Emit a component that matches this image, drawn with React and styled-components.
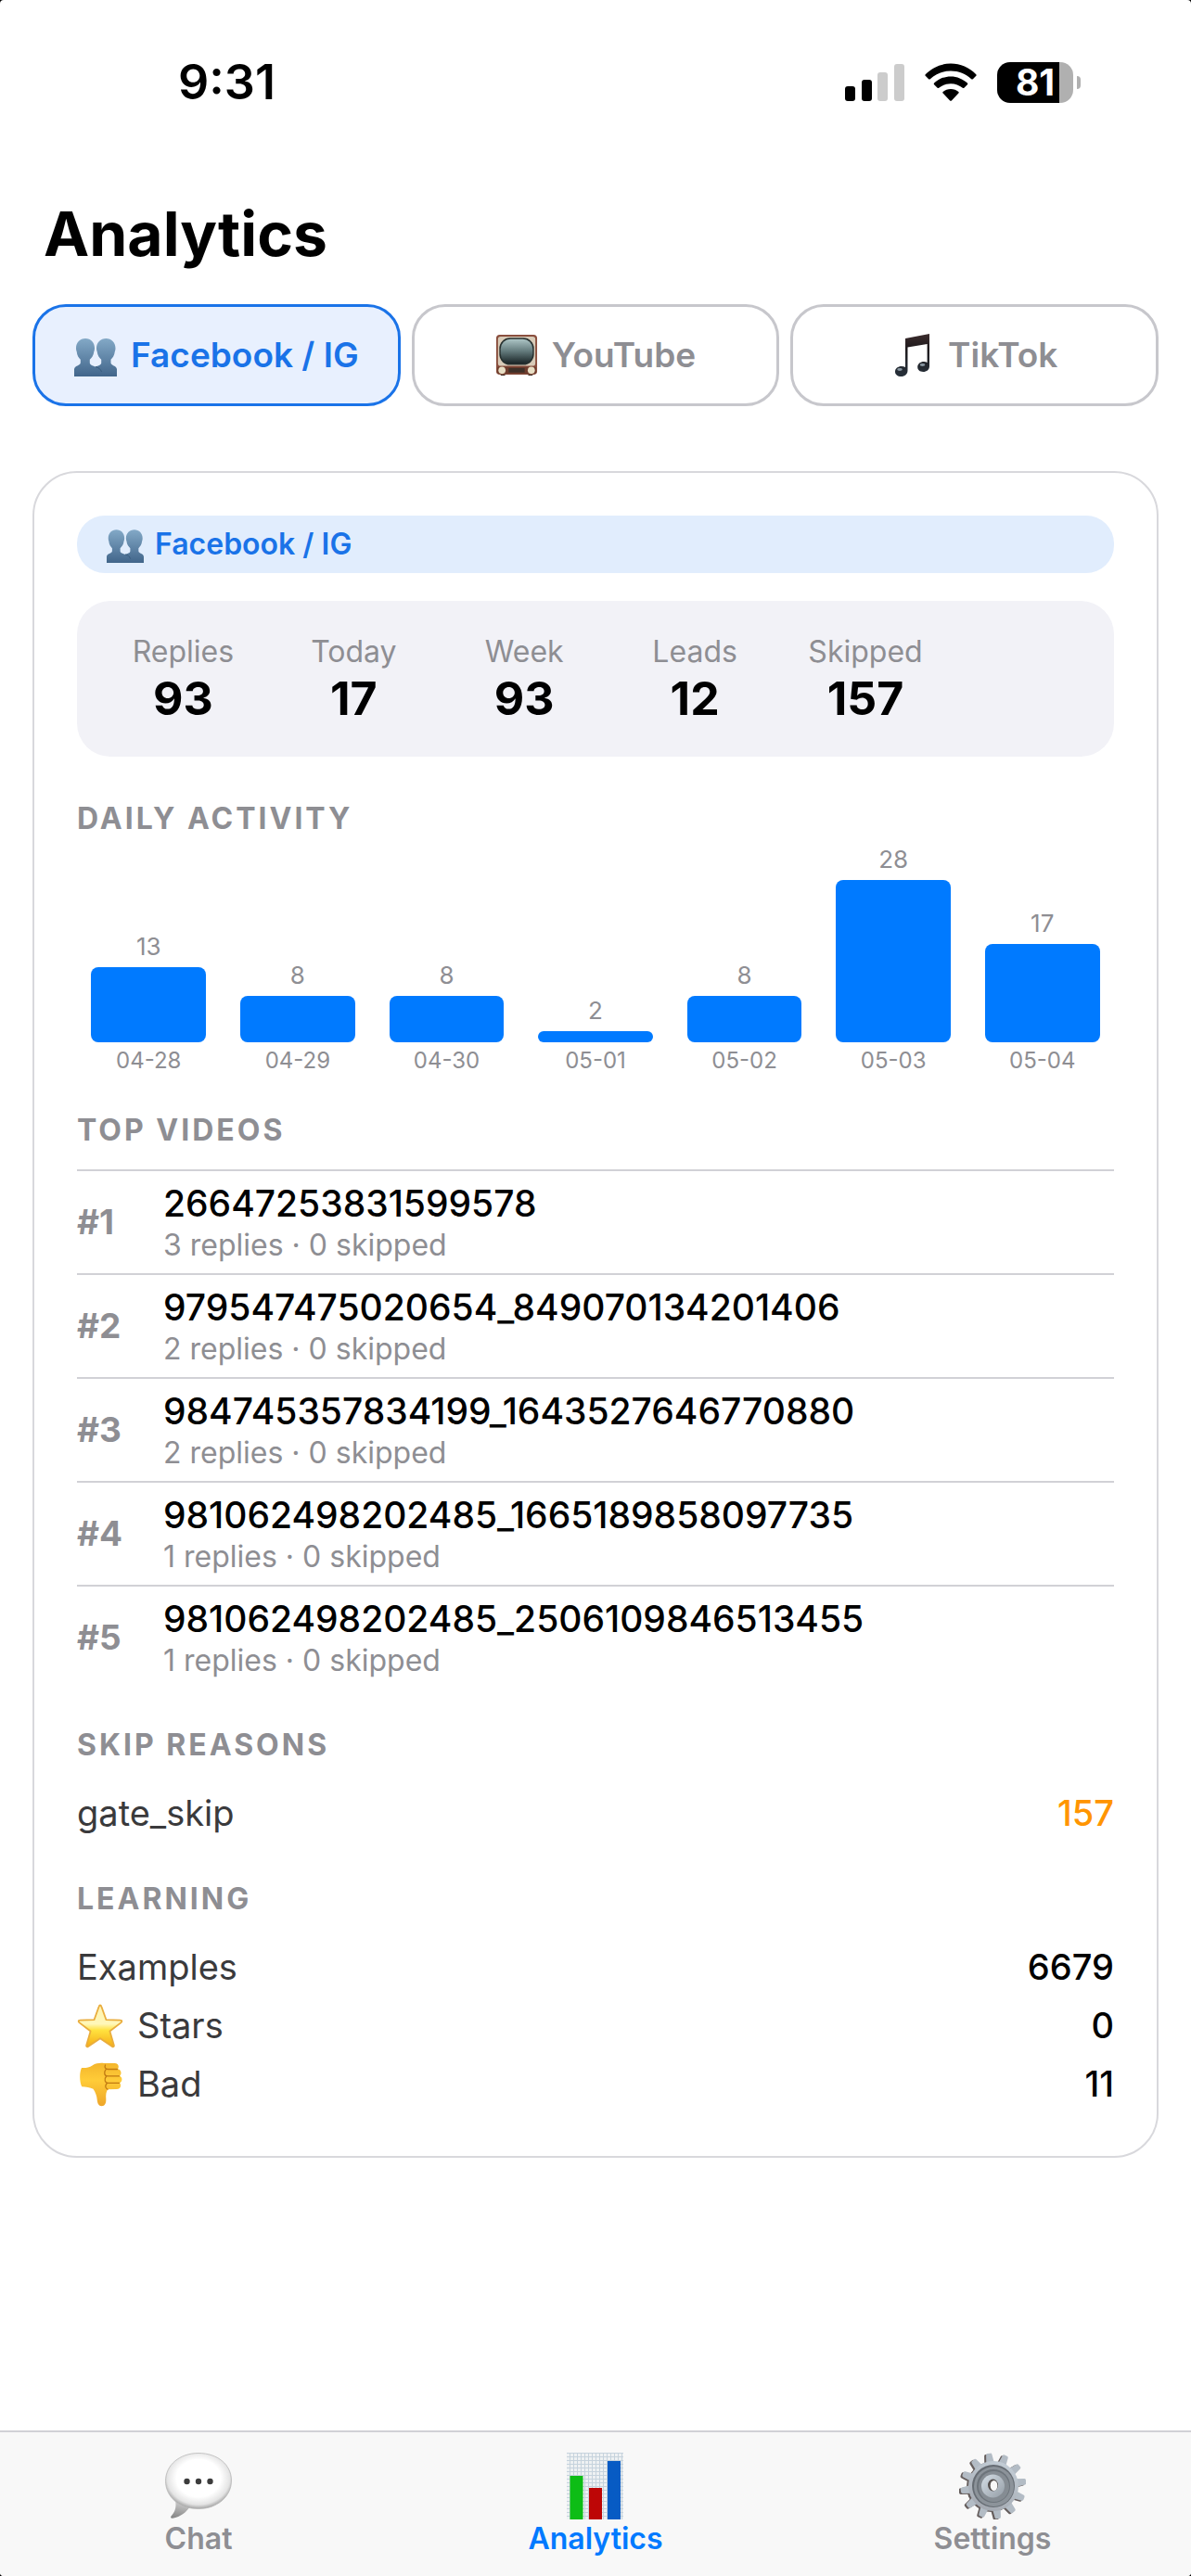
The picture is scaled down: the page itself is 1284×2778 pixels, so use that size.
import React from 'react';
import styled, { createGlobalStyle, ThemeProvider } from 'styled-components';


const theme = {
  colors: {
    text: '#000000',
    body: '#3a3a3c',
    muted: '#8e8e93',
    blue: '#1a73e8',
    system: '#007aff',
    orange: '#ff9500',
    line: '#d1d1d6',
    panel: '#f2f2f7',
  },
  fonts: {
    main: 'Inter, "Liberation Sans", sans-serif',
  },
};

const GlobalStyle = createGlobalStyle`
  * {
    box-sizing: border-box;
  }
  body {
    margin: 0;
    background: #000000;
  }
  button {
    font-family: inherit;
    cursor: pointer;
  }
`;

const Screen = styled.div`
  min-height: 100vh;
  display: flex;
  flex-direction: column;
  overflow: hidden;
  border-radius: 4px;
  background: #ffffff;
  color: ${(props) => props.theme.colors.text};
  font-family: ${(props) => props.theme.fonts.main};
`;

const StatusBar = styled.header`
  display: flex;
  justify-content: space-between;
  align-items: center;
  padding: 58px 119px 0 192px;
`;

const Time = styled.span`
  font-size: 52px;
  line-height: 62px;
  font-weight: 600;
`;

const StatusIcons = styled.div`
  display: flex;
  align-items: center;
  gap: 22px;
`;

const BatteryWrap = styled.div`
  display: flex;
  align-items: center;
  gap: 4px;
`;

const BatteryBody = styled.div`
  width: 82px;
  border-radius: 14px;
  background: linear-gradient(to right, #000000 82%, #b0b0b0 82%);
  color: #ffffff;
  font-size: 39px;
  line-height: 44px;
  font-weight: 700;
  text-align: center;
`;

const BatteryTip = styled.div`
  width: 4px;
  height: 14px;
  border-radius: 0 4px 4px 0;
  background: #b0b0b0;
`;

const Main = styled.main`
  flex: 1;
  padding: 90px 35px 0;
`;

const Title = styled.h1`
  margin: 0 0 34px 12px;
  font-size: 66px;
  line-height: 84px;
  font-weight: 700;
`;

const Tabs = styled.div`
  display: flex;
  gap: 12px;
  margin-bottom: 70px;
`;

const Tab = styled.button`
  flex: 1 1 0;
  min-width: 0;
  display: flex;
  justify-content: center;
  align-items: center;
  gap: 15px;
  padding: 29px 0;
  border: 3px solid ${(props) => (props.$active ? props.theme.colors.blue : '#c7c7cc')};
  border-radius: 36px;
  background: ${(props) => (props.$active ? '#e8f0fe' : '#ffffff')};
  color: ${(props) => (props.$active ? props.theme.colors.blue : props.theme.colors.muted)};
  font-size: 37px;
  line-height: 46px;
  font-weight: 600;
`;

const Card = styled.section`
  padding: 46px;
  border: 2px solid #d8d8dc;
  border-radius: 48px;
`;

const Badge = styled.div`
  display: flex;
  align-items: center;
  gap: 12px;
  padding: 10px 32px;
  margin-bottom: 30px;
  border-radius: 30px;
  background: #e1edfd;
  color: ${(props) => props.theme.colors.blue};
  font-size: 32px;
  line-height: 42px;
  font-weight: 600;
`;

const Stats = styled.dl`
  display: grid;
  grid-template-columns: repeat(5, 15%);
  column-gap: 27px;
  margin: 0 0 47px;
  padding: 34px 36px;
  border-radius: 36px;
  background: ${(props) => props.theme.colors.panel};
  text-align: center;
`;

const StatLabel = styled.dt`
  color: ${(props) => props.theme.colors.muted};
  font-size: 32px;
  line-height: 42px;
`;

const StatValue = styled.dd`
  margin: 0;
  font-size: 50px;
  line-height: 58px;
  font-weight: 700;
`;

const SectionTitle = styled.h2`
  margin: 0 0 ${(props) => (props.$tight ? '8px' : '22px')};
  color: ${(props) => props.theme.colors.muted};
  font-size: 32px;
  line-height: 40px;
  font-weight: 700;
  letter-spacing: 3px;
  text-transform: uppercase;
`;

const Chart = styled.div`
  display: flex;
  gap: 6px;
  margin-bottom: 40px;
`;

const Day = styled.div`
  flex: 1;
  display: flex;
  flex-direction: column;
  align-items: center;
  color: ${(props) => props.theme.colors.muted};
`;

const BarArea = styled.div`
  width: 100%;
  height: 213px;
  padding-top: 38px;
  display: flex;
  flex-direction: column;
  justify-content: flex-end;
  align-items: center;
`;

const BarSlot = styled.div`
  width: 80%;
  height: 175px;
  display: flex;
  flex-direction: column;
  justify-content: flex-end;
`;

const BarValue = styled.span`
  padding-bottom: 6px;
  font-size: 26px;
  line-height: 32px;
  text-align: center;
`;

const Bar = styled.div`
  flex-shrink: 0;
  border-radius: 8px;
  background: ${(props) => props.theme.colors.system};
`;

const BarDate = styled.span`
  margin-top: 5px;
  font-size: 24px;
  line-height: 30px;
`;

const Videos = styled.ol`
  margin: 0 0 41px;
  padding: 0;
  list-style: none;
`;

const Video = styled.li`
  display: flex;
  align-items: center;
  padding: 10px 0;
  border-top: 2px solid ${(props) => props.theme.colors.line};
`;

const Rank = styled.span`
  width: 93px;
  color: ${(props) => props.theme.colors.muted};
  font-size: 37px;
  line-height: 44px;
  font-weight: 700;
`;

const VideoId = styled.div`
  font-size: 39px;
  line-height: 50px;
  font-weight: 500;
`;

const VideoMeta = styled.div`
  color: ${(props) => props.theme.colors.muted};
  font-size: 32px;
  line-height: 40px;
`;

const Rows = styled.dl`
  margin: 0 0 ${(props) => (props.$last ? '0' : '41px')};
`;

const Row = styled.div`
  display: flex;
  justify-content: space-between;
  align-items: center;
  font-size: 38px;
  line-height: 63px;
`;

const RowLabel = styled.dt`
  display: flex;
  align-items: center;
  gap: 15px;
  color: ${(props) => props.theme.colors.body};
`;

const RowValue = styled.dd`
  margin: 0;
  color: ${(props) => (props.$warn ? props.theme.colors.orange : props.theme.colors.text)};
  font-weight: 500;
`;

const TabBar = styled.nav`
  display: flex;
  padding: 22px 0 19px;
  border-top: 2px solid ${(props) => props.theme.colors.line};
  background: #f8f8f8;
`;

const TabBarItem = styled.a`
  flex: 1;
  display: flex;
  flex-direction: column;
  align-items: center;
  color: ${(props) => (props.$active ? props.theme.colors.system : props.theme.colors.muted)};
  font-size: 32px;
  line-height: 42px;
  font-weight: 600;
  text-decoration: none;
`;


const SignalIcon = () => (
  <svg width="64" height="42" viewBox="0 0 64 42" aria-hidden="true">
    <rect x="0" y="25" width="11" height="16" rx="3" />
    <rect x="18" y="18" width="11" height="23" rx="3" />
    <rect x="35" y="10" width="11" height="31" rx="3" fill="#cccccc" />
    <rect x="53" y="1" width="11" height="40" rx="3" fill="#cccccc" />
  </svg>
);

const WifiIcon = () => (
  <svg width="56" height="42" viewBox="0 0 56 42" aria-hidden="true">
    <path d="M0.7 12.2C8 4.9 17.600 0.500 28 0.500s20 4.400 27.300 11.700c.5.5.5 1.100 0 1.600l-3.400 3.400c-.5.5-1.200.5-1.700 0C44.300 11.600 36.500 8.400 28 8.400S11.700 11.600 5.800 17.200c-.5.5-1.200.5-1.700 0L.7 13.800c-.5-.5-.5-1.100 0-1.600z" />
    <path d="M10.100 21.600C15 17 21.200 14.400 28 14.400s13 2.600 17.900 7.200c.5.5.5 1.200 0 1.700l-3.500 3.400c-.5.5-1.100.5-1.600.1C37.300 23.900 32.900 22.200 28 22.200s-9.300 1.700-12.800 4.600c-.5.4-1.100.4-1.600-.1l-3.500-3.400c-.5-.5-.5-1.200 0-1.700z" />
    <path d="M19.600 31c2.300-2 5.200-3.100 8.400-3.100s6.100 1.100 8.400 3.100c.5.5.5 1.100 0 1.600l-7.500 7.800c-.5.5-1.300.5-1.800 0l-7.500-7.800c-.5-.5-.5-1.100 0-1.600z" />
  </svg>
);

const PeopleIcon = ({ size }) => (
  <svg width={size} height={size} viewBox="0 0 46 46" aria-hidden="true">
    <defs>
      <linearGradient id="people" x1="0" y1="0" x2="0" y2="1">
        <stop offset="0" stopColor="#83a9c7" />
        <stop offset="1" stopColor="#41658a" />
      </linearGradient>
    </defs>
    <path
      fill="url(#people)"
      d="M12 5c6 0 10 4.500 10 10.500 0 1.500-.2 2.700-.7 3.800-.4 4.200-2.600 6.700-4.500 8.500v3.400c0 2.600 4 3.200 6.200 4.300 2.200-1.100 6.200-1.700 6.200-4.300v-3.400c-1.900-1.800-4.100-4.300-4.500-8.500-.5-1.100-.7-2.300-.7-3.800C24 9.500 28.500 5 34.300 5S44.500 9.500 44.500 15.500c0 1.500-.2 2.700-.7 3.800-.4 4.200-2.500 6.700-4.300 8.500v3.400c0 3.200 6.500 2.800 6.500 7.300V46H0v-7.500c0-4.500 6.800-4.100 6.800-7.300v-3.400C5 26 3 23.500 2.700 19.300 2.200 18.200 2 17 2 15.500 2 9.500 6.200 5 12 5z"
    />
    <path fill="none" stroke="#385a7c" strokeWidth="1" d="M23 35.500c3.500 1 5.500 2.500 6.500 5.500" />
  </svg>
);

const TvIcon = () => (
  <svg width="46" height="46" viewBox="0 0 48 46" aria-hidden="true">
    <defs>
      <linearGradient id="tvScreen" x1="0" y1="0" x2="0" y2="1">
        <stop offset="0" stopColor="#acc4c5" />
        <stop offset="0.5" stopColor="#62797b" />
        <stop offset="1" stopColor="#1a2426" />
      </linearGradient>
    </defs>
    <path fill="#3b2a22" d="M6 43h5v3H6zM37 43h5v3h-5z" />
    <rect x="1" y="0" width="46" height="45" rx="4" fill="#8a4f3e" />
    <rect x="3" y="2" width="42" height="33" rx="3" fill="#d8cbb8" />
    <rect x="4.500" y="3.500" width="39" height="30.500" rx="12" fill="#26302f" />
    <rect x="6" y="5" width="36" height="27.500" rx="11" fill="url(#tvScreen)" />
    <rect x="2" y="36" width="44" height="8" rx="2" fill="#6e3c2d" />
    <rect x="15" y="37.500" width="18" height="5" fill="#3e3028" />
    <circle cx="7.500" cy="40" r="4" fill="#e8dfc5" />
    <circle cx="40.500" cy="40" r="4" fill="#e8dfc5" />
  </svg>
);

const MusicIcon = () => (
  <svg width="46" height="46" viewBox="0 0 46 46" aria-hidden="true">
    <defs>
      <linearGradient id="note" x1="0" y1="0" x2="0" y2="1">
        <stop offset="0" stopColor="#3c2c2d" />
        <stop offset="0.350" stopColor="#1d191c" />
        <stop offset="1" stopColor="#27313b" />
      </linearGradient>
    </defs>
    <path
      fill="url(#note)"
      d="M15 5l26-5v35c0 3.800-3 6-6.800 6-3.600 0-6-2-6-5.200 0-3.500 3.100-5.800 6.800-5.800 1.400 0 2.600.3 3.600.9V11L17.500 14.500V39.500c0 3.900-3 6.500-7 6.500C6.700 46 4 43.900 4 40.700c0-3.400 3.100-5.700 6.900-5.700 1.600 0 3 .4 4.100 1.100z"
    />
    <ellipse cx="9" cy="38.500" rx="2.800" ry="1.400" fill="#8997a2" />
    <ellipse cx="33.500" cy="33.500" rx="2.800" ry="1.400" fill="#8997a2" />
  </svg>
);

const StarIcon = () => (
  <svg width="50" height="48" viewBox="0 0 50 48" aria-hidden="true">
    <defs>
      <linearGradient id="star" x1="0" y1="0" x2="0" y2="1">
        <stop offset="0" stopColor="#fff3b0" />
        <stop offset="0.450" stopColor="#fff7b8" />
        <stop offset="0.600" stopColor="#ffe23f" />
        <stop offset="1" stopColor="#f5ab16" />
      </linearGradient>
    </defs>
    <path
      fill="url(#star)"
      stroke="#e9ad3d"
      strokeWidth="1.800"
      strokeLinejoin="round"
      d="M25 1.500c.8 0 1.100.6 1.400 1.500L31.500 17.200l15.300.5c1.700 0 2 1.400.8 2.400L35.400 29.500l4.400 15c.5 1.600-.6 2.300-1.900 1.400L25 37.200 12.100 45.900c-1.300.9-2.400.2-1.900-1.400l4.400-15L2.400 20.100c-1.200-1-.9-2.400.8-2.400l15.300-.5L23.600 3c.3-.9.600-1.500 1.400-1.500z"
    />
  </svg>
);

const ThumbDownIcon = () => (
  <svg width="50" height="48" viewBox="0 0 50 48" aria-hidden="true">
    <defs>
      <linearGradient id="thumb" x1="0" y1="0" x2="0" y2="1">
        <stop offset="0" stopColor="#f4b62c" />
        <stop offset="0.400" stopColor="#ffcc38" />
        <stop offset="1" stopColor="#eea62a" />
      </linearGradient>
    </defs>
    <path
      fill="url(#thumb)"
      d="M5 6c4 .4 8-.3 11.500-2.600C20.500 1 25 .6 29 1h11.500c2.600 0 4.300 1.600 4.300 3.800 0 1-.3 1.800-.8 2.500 2.300.5 3.500 2.200 3.500 4.200 0 1.300-.5 2.400-1.400 3.200 1.500.8 2.300 2.100 2.300 3.800 0 1.700-.9 3.100-2.400 3.800.8.8 1.100 1.700 1.100 2.700 0 2.400-1.900 4-4.300 4L33 29.200c-1.600 2.600-2 6.300-1.700 10.300.3 4.600-1.200 7.700-4.600 7.700-3.300 0-4.700-3-5-7-.3-3.700-1.700-7.800-4.200-11.400-3.300-1.600-7.800-2.200-12.300-2.500C2.600 20.500 2.500 11 5 6z"
    />
    <path
      fill="none"
      stroke="#c17a12"
      strokeWidth="1.300"
      strokeLinecap="round"
      d="M43.500 7.500H33.500c-3 0-4-2-3-4.500M45.500 14.900H33c-3.500 0-4.300-4-2-7M45.500 22.300H33.500c-3.500 0-4.500-4.200-2-7M32 23c-2 2.300-1.500 5 1 6.200"
    />
  </svg>
);

const ChatIcon = () => (
  <svg width="72" height="72" viewBox="0 0 72 72" aria-hidden="true">
    <defs>
      <radialGradient id="bubble" cx="0.500" cy="0.450" r="0.560">
        <stop offset="0.600" stopColor="#ffffff" />
        <stop offset="0.850" stopColor="#e4e4e4" />
        <stop offset="1" stopColor="#9c9c9c" />
      </radialGradient>
      <linearGradient id="tail" x1="0.500" y1="0" x2="0.300" y2="1">
        <stop offset="0" stopColor="#d0d0d0" />
        <stop offset="1" stopColor="#868686" />
      </linearGradient>
    </defs>
    <path fill="url(#tail)" d="M11 52c1.500 7-.5 12-4.500 16.500-1 1.300-.2 2.500 1.500 2.200C17 69 23 64.500 27.500 57z" />
    <path
      fill="url(#bubble)"
      stroke="#b9b9b9"
      strokeWidth="0.800"
      d="M36 .5c20.500 0 35.500 12.500 35.500 29.500S56.500 60.500 36 60.500C15 60.500.5 47.500.5 30.500S15.500.5 36 .5z"
    />
    <circle cx="23.500" cy="31" r="3.200" fill="#3d3d3d" />
    <circle cx="36" cy="31" r="3.200" fill="#3d3d3d" />
    <circle cx="48.500" cy="31" r="3.200" fill="#3d3d3d" />
  </svg>
);

const ChartIcon = () => (
  <svg width="72" height="72" viewBox="0 0 72 72" aria-hidden="true">
    <defs>
      <pattern id="grid" width="4" height="4" patternUnits="userSpaceOnUse">
        <rect width="4" height="4" fill="#eef1f3" />
        <path d="M0 .5h4M.5 0v4" stroke="#c6d3dd" strokeWidth="1" />
      </pattern>
    </defs>
    <rect x="5" y="0" width="61" height="72" fill="url(#grid)" />
    <rect x="8.500" y="25" width="14" height="47" fill="#0dbd16" />
    <rect x="29" y="38" width="14" height="34" fill="#bd0606" />
    <rect x="49" y="9" width="14" height="63" fill="#075bc4" />
  </svg>
);

const teeth = Array.from({ length: 12 }, (_, i) => i * 30 - 8);

const GearTeeth = () => teeth.map((angle) => (
  <path key={angle} d="M31.500 13l1.300-11q.2-1.500 1.700-1.500h3q1.500 0 1.700 1.500l1.300 11z" transform={`rotate(${angle} 36 36)`} />
));

const GearIcon = () => (
  <svg width="72" height="72" viewBox="0 0 72 72" aria-hidden="true">
    <defs>
      <linearGradient id="gear" x1="0.700" y1="0" x2="0.300" y2="1">
        <stop offset="0" stopColor="#c3cdd6" />
        <stop offset="1" stopColor="#a3a8b0" />
      </linearGradient>
      <linearGradient id="hub" x1="0" y1="0" x2="1" y2="1">
        <stop offset="0" stopColor="#d5dee6" />
        <stop offset="1" stopColor="#949da6" />
      </linearGradient>
    </defs>
    <g fill="#665e5d" transform="translate(-1 1)">
      <GearTeeth />
      <circle cx="36" cy="36" r="27" />
    </g>
    <g fill="#b3bcc5" transform="translate(1 0)">
      <GearTeeth />
    </g>
    <circle cx="37" cy="36" r="27" fill="url(#gear)" />
    <circle cx="37" cy="36" r="23" fill="#666c73" />
    <circle cx="37.500" cy="36.500" r="21.500" fill="#8c939a" />
    <circle cx="37" cy="36" r="18" fill="#6d747b" />
    <circle cx="37.500" cy="36.500" r="16.500" fill="#858c93" />
    <circle cx="36.500" cy="36" r="12.500" fill="url(#hub)" />
    <ellipse cx="36.500" cy="35" rx="5.500" ry="6.500" fill="#55504e" />
    <ellipse cx="37.500" cy="35.500" rx="3.800" ry="5.500" fill="#f8f8f8" />
  </svg>
);


const platforms = [
  { name: 'Facebook / IG', icon: <PeopleIcon size={46} /> },
  { name: 'YouTube', icon: <TvIcon /> },
  { name: 'TikTok', icon: <MusicIcon /> },
];

const stats = [
  { label: 'Replies', value: 93 },
  { label: 'Today', value: 17 },
  { label: 'Week', value: 93 },
  { label: 'Leads', value: 12 },
  { label: 'Skipped', value: 157 },
];

const days = [
  { date: '04-28', count: 13 },
  { date: '04-29', count: 8 },
  { date: '04-30', count: 8 },
  { date: '05-01', count: 2 },
  { date: '05-02', count: 8 },
  { date: '05-03', count: 28 },
  { date: '05-04', count: 17 },
];

const videos = [
  { id: '26647253831599578', replies: 3, skipped: 0 },
  { id: '979547475020654_849070134201406', replies: 2, skipped: 0 },
  { id: '984745357834199_1643527646770880', replies: 2, skipped: 0 },
  { id: '981062498202485_1665189858097735', replies: 1, skipped: 0 },
  { id: '981062498202485_2506109846513455', replies: 1, skipped: 0 },
];

const learning = [
  { label: 'Examples', value: 6679 },
  { label: 'Stars', value: 0, icon: <StarIcon /> },
  { label: 'Bad', value: 11, icon: <ThumbDownIcon /> },
];

const navigation = [
  { label: 'Chat', icon: <ChatIcon /> },
  { label: 'Analytics', icon: <ChartIcon /> },
  { label: 'Settings', icon: <GearIcon /> },
];

const maxCount = Math.max(...days.map((day) => day.count));


const App = () => {
  const [platform, setPlatform] = React.useState('Facebook / IG');
  return (
    <ThemeProvider theme={theme}>
      <GlobalStyle />
      <Screen>
        <StatusBar>
          <Time>9:31</Time>
          <StatusIcons>
            <SignalIcon />
            <WifiIcon />
            <BatteryWrap>
              <BatteryBody>81</BatteryBody>
              <BatteryTip />
            </BatteryWrap>
          </StatusIcons>
        </StatusBar>
        <Main>
          <Title>Analytics</Title>
          <Tabs>
            {platforms.map(({ name, icon }) => (
              <Tab
                key={name}
                type="button"
                $active={name === platform}
                aria-pressed={name === platform}
                onClick={() => setPlatform(name)}
              >
                {icon}
                {name}
              </Tab>
            ))}
          </Tabs>
          <Card>
            <Badge>
              <PeopleIcon size={40} />
              Facebook / IG
            </Badge>
            <Stats>
              {stats.map(({ label, value }) => (
                <div key={label}>
                  <StatLabel>{label}</StatLabel>
                  <StatValue>{value}</StatValue>
                </div>
              ))}
            </Stats>
            <SectionTitle $tight>Daily activity</SectionTitle>
            <Chart>
              {days.map(({ date, count }) => (
                <Day key={date}>
                  <BarArea>
                    <BarSlot>
                      <BarValue>{count}</BarValue>
                      <Bar style={{ height: `${(count / maxCount) * 100}%` }} />
                    </BarSlot>
                  </BarArea>
                  <BarDate>{date}</BarDate>
                </Day>
              ))}
            </Chart>
            <SectionTitle>Top videos</SectionTitle>
            <Videos>
              {videos.map(({ id, replies, skipped }, index) => (
                <Video key={id}>
                  <Rank>{`#${index + 1}`}</Rank>
                  <div>
                    <VideoId>{id}</VideoId>
                    <VideoMeta>{`${replies} replies · ${skipped} skipped`}</VideoMeta>
                  </div>
                </Video>
              ))}
            </Videos>
            <SectionTitle>Skip reasons</SectionTitle>
            <Rows>
              <Row>
                <RowLabel>gate_skip</RowLabel>
                <RowValue $warn>157</RowValue>
              </Row>
            </Rows>
            <SectionTitle>Learning</SectionTitle>
            <Rows $last>
              {learning.map(({ label, value, icon }) => (
                <Row key={label}>
                  <RowLabel>
                    {icon}
                    {label}
                  </RowLabel>
                  <RowValue>{value}</RowValue>
                </Row>
              ))}
            </Rows>
          </Card>
        </Main>
        <TabBar>
          {navigation.map(({ label, icon }) => (
            <TabBarItem
              key={label}
              href={`#${label.toLowerCase()}`}
              $active={label === 'Analytics'}
              aria-current={label === 'Analytics' ? 'page' : undefined}
            >
              {icon}
              {label}
            </TabBarItem>
          ))}
        </TabBar>
      </Screen>
    </ThemeProvider>
  );
};


export default App;
